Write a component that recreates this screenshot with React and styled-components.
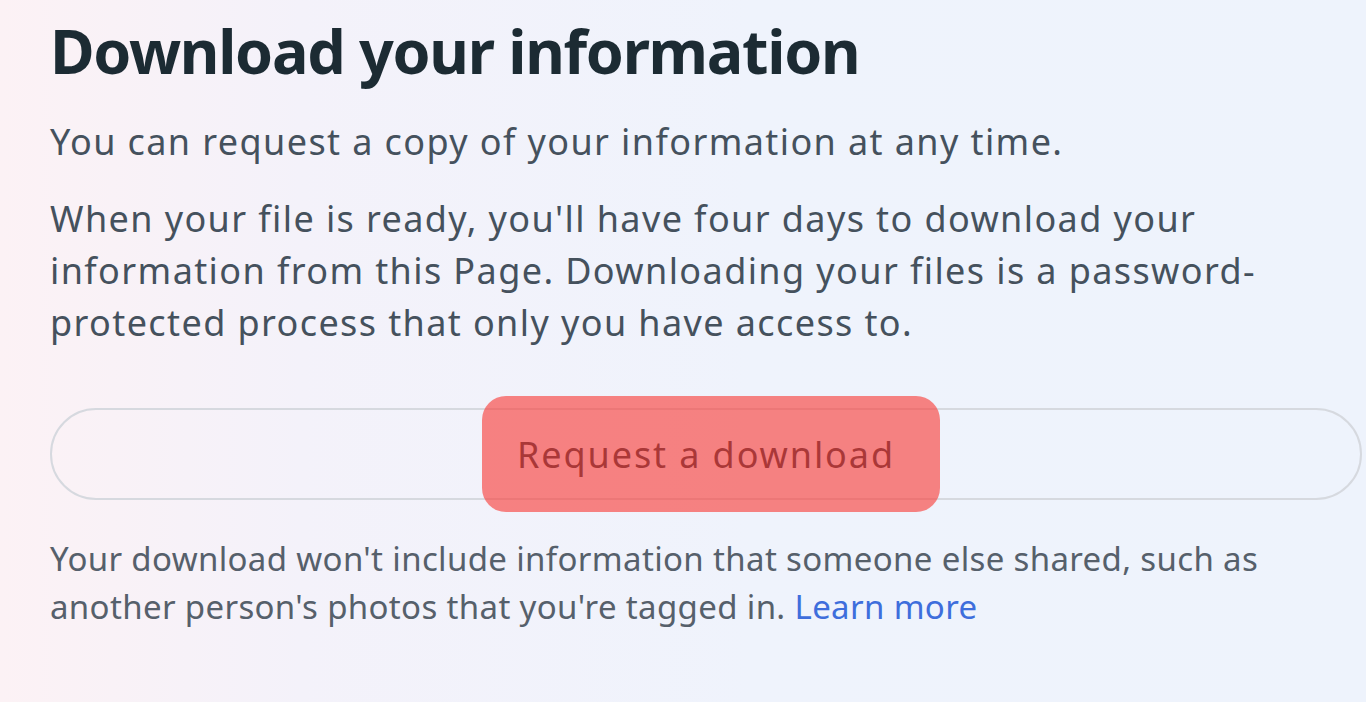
import React from "react";
import styled, { createGlobalStyle } from "styled-components";

const GlobalStyle = createGlobalStyle`
  html, body {
    margin: 0;
    padding: 0;
  }
  body {
    font-family: "Noto Sans", "Liberation Sans", sans-serif;
    background: linear-gradient(90deg, #fcf2f5 0%, #f4f2fa 22%, #eff3fc 55%, #eef3fc 100%);
    min-height: 702px;
    overflow: hidden;
  }
`;

const Page = styled.main`
  width: 1312px;
  padding: 15px 0 0 50px;
`;

const Title = styled.h1`
  margin: 0;
  font-size: 61px;
  line-height: 72px;
  font-weight: 700;
  color: #1c2b33;
  letter-spacing: -1.3px;
`;

const Text = styled.p`
  margin: ${(p) => p.$top}px 0 0;
  font-size: 36px;
  line-height: 52px;
  color: #45515d;
  letter-spacing: 1.4px;
`;

const ButtonRow = styled.div`
  position: relative;
  margin-top: 59px;
`;

const PillButton = styled.button`
  display: flex;
  align-items: center;
  justify-content: center;
  width: 100%;
  height: 92px;
  border: 2px solid #d6d9df;
  border-radius: 46px;
  background: transparent;
  font-family: inherit;
  font-size: 36px;
  letter-spacing: 1.9px;
  color: #1c2b33;
  cursor: pointer;
`;

const Highlight = styled.span`
  position: absolute;
  left: 432px;
  top: -12px;
  width: 458px;
  height: 116px;
  border-radius: 24px;
  background: rgba(249, 64, 59, 0.64);
  pointer-events: none;
`;

const Note = styled.p`
  margin: 35px 0 0;
  font-size: 33px;
  line-height: 48px;
  color: #56606b;
  letter-spacing: 0.35px;
`;

const Link = styled.a`
  color: #3e6edc;
  text-decoration: none;
`;

export default function App() {
  return (
    <>
      <GlobalStyle />
      <Page>
        <Title>Download your information</Title>
        <Text $top={29}>You can request a copy of your information at any time.</Text>
        <Text $top={25}>
          When your file is ready, you'll have four days to download your
          information from this Page. Downloading your files is a
          password-protected process that only you have access to.
        </Text>
        <ButtonRow>
          <PillButton>Request a download</PillButton>
          <Highlight />
        </ButtonRow>
        <Note>
          Your download won't include information that someone else shared,
          such as another person's photos that you're tagged in.{" "}
          <Link href="#">Learn more</Link>
        </Note>
      </Page>
    </>
  );
}
